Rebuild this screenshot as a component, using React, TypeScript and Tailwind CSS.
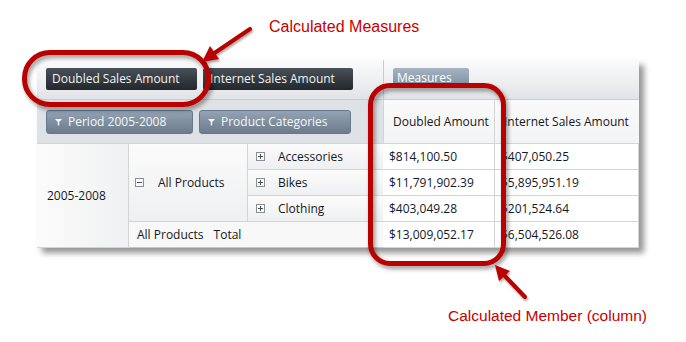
import React from "react";

const Funnel = () => (
  <svg width="7" height="8" viewBox="0 0 7 8" className="shrink-0">
    <polygon points="0,1 7,1 4.2,4 4.2,7.5 2.8,7.5 2.8,4" fill="#f4f6f8" />
  </svg>
);

const PlusBox = ({ minus = false }: { minus?: boolean }) => (
  <svg width="9" height="9" viewBox="0 0 9 9" className="shrink-0">
    <rect x="0.5" y="0.5" width="8" height="8" fill="#fbfbfb" stroke="#8a8f96" />
    <line x1="2" y1="4.5" x2="7" y2="4.5" stroke="#4a4f56" />
    {!minus && <line x1="4.5" y1="2" x2="4.5" y2="7" stroke="#4a4f56" />}
  </svg>
);

export default function App() {
  const cell = "border-b border-r border-[#d2d4d6] flex items-center";
  const val = "bg-white " + cell + " pl-[6px]";
  return (
    <div className="relative w-[686px] h-[342px] bg-white overflow-hidden font-['Open_Sans',sans-serif] text-[12px] text-[#141826]">
      <div className="pt-[60px] pl-[37px]">
        <div className="w-[602px] shadow-[5px_5px_6px_rgba(0,0,0,0.42)] bg-white">
          {/* header row 1 */}
          <div className="flex h-[40px] bg-gradient-to-b from-[#fbfbfc] to-[#e1e4e7] border-b border-[#c8cdd2]">
            <div className="w-[346px] flex gap-[6px] pl-[9px] pt-[8px]">
              <div className="w-[151px] h-[22px] rounded-[2px] bg-gradient-to-b from-[#4a5159] to-[#22272c] text-[#f3f3f3] flex items-center pl-[6px] leading-none">
                Doubled Sales Amount
              </div>
              <div className="w-[150px] h-[22px] rounded-[2px] bg-gradient-to-b from-[#4a5159] to-[#22272c] text-[#f3f3f3] flex items-center pl-[7px] leading-none">
                Internet Sales Amount
              </div>
            </div>
            <div className="flex-1 border-l border-[#c6cbd0] pl-[9px] pt-[8px]">
              <div className="w-[76px] h-[20px] rounded-[2px] bg-gradient-to-b from-[#a5b3c2] to-[#7c8c9d] text-white flex items-center pl-[4px] leading-none">
                Measures
              </div>
            </div>
          </div>
          {/* header row 2 */}
          <div className="flex h-[44px] border-b border-[#d2d4d6]">
            <div className="w-[346px] bg-[#dee1e5] flex gap-[6px] pl-[9px] pt-[10px]">
              <div className="w-[147px] h-[24px] rounded-[3px] border border-[#66788a] bg-gradient-to-b from-[#93a3b3] to-[#6c7c8d] text-[#f6f7f8] flex items-center gap-[6px] pl-[8px] leading-none">
                <Funnel />
                Period 2005-2008
              </div>
              <div className="w-[152px] h-[24px] rounded-[3px] border border-[#66788a] bg-gradient-to-b from-[#93a3b3] to-[#6c7c8d] text-[#f6f7f8] flex items-center gap-[6px] pl-[8px] leading-none">
                <Funnel />
                Product Categories
              </div>
            </div>
            <div className="w-[112px] border-l border-r border-[#d2d4d6] bg-gradient-to-b from-[#fafafa] to-[#f3f4f5] flex items-center pl-[9px]">
              Doubled Amount
            </div>
            <div className="w-[144px] bg-gradient-to-b from-[#fafafa] to-[#f3f4f5] flex items-center pl-[9px]">
              Internet Sales Amount
            </div>
          </div>
          {/* data */}
          <div className="grid grid-cols-[92px_119px_135px_112px_144px] grid-rows-[26px_26px_26px_26px]">
            <div className="row-span-4 border-r border-b border-[#d2d4d6] bg-gradient-to-r from-[#fbfbfb] to-[#f0f1f2] flex items-center pl-[10px]">
              2005-2008
            </div>
            <div className="row-span-3 border-r border-b border-[#d2d4d6] bg-gradient-to-b from-[#fbfbfb] to-[#eff0f1] flex items-center pl-[6px] gap-[14px]">
              <PlusBox minus />
              All Products
            </div>
            <div className="bg-gradient-to-b from-[#fcfcfc] to-[#eeeff0] border-b border-[#d2d4d6] flex items-center pl-[8px] gap-[13px]">
              <PlusBox />
              Accessories
            </div>
            <div className={val}>$814,100.50</div>
            <div className={val}>$407,050.25</div>
            <div className="bg-gradient-to-b from-[#fcfcfc] to-[#eeeff0] border-b border-[#d2d4d6] flex items-center pl-[8px] gap-[13px]">
              <PlusBox />
              Bikes
            </div>
            <div className={val}>$11,791,902.39</div>
            <div className={val}>$5,895,951.19</div>
            <div className="bg-gradient-to-b from-[#fcfcfc] to-[#eeeff0] border-b border-[#d2d4d6] flex items-center pl-[8px] gap-[13px]">
              <PlusBox />
              Clothing
            </div>
            <div className={val}>$403,049.28</div>
            <div className={val}>$201,524.64</div>
            <div className="col-span-2 bg-[#f8f8f8] border-b border-[#c4c6c8] flex items-center pl-[8px]">
              <span>All Products</span>
              <span className="ml-[10px]">Total</span>
            </div>
            <div className={val + " border-[#c4c6c8]"}>$13,009,052.17</div>
            <div className={val + " border-[#c4c6c8]"}>$6,504,526.08</div>
          </div>
        </div>
      </div>

      {/* annotations */}
      <div className="absolute inset-0 pointer-events-none font-['Liberation_Sans',Arial,sans-serif]">
        <div className="absolute left-[269px] top-[18px] text-[16px] leading-[18px] text-[#c80000]">
          Calculated Measures
        </div>
        <div className="absolute left-[448px] top-[307px] text-[15.5px] leading-[18px] text-[#c80000]">
          Calculated Member (column)
        </div>
        <div className="absolute left-[22px] top-[50px] w-[189px] h-[57px] rounded-[28px] border-[5px] border-[#bb0000] drop-shadow-[2px_3px_2px_rgba(0,0,0,0.4)]" />
        <div className="absolute left-[368px] top-[83px] w-[138px] h-[183px] rounded-[22px] border-[5px] border-[#bb0000] drop-shadow-[2px_3px_2px_rgba(0,0,0,0.4)]" />
        <svg
          width="686"
          height="342"
          viewBox="0 0 686 342"
          className="absolute left-0 top-0 drop-shadow-[1px_2px_1px_rgba(0,0,0,0.35)]"
        >
          <line x1="250" y1="29" x2="213" y2="54" stroke="#bb0000" strokeWidth="4" strokeLinecap="round" />
          <polygon points="202,62 219,59 210,46" fill="#bb0000" />
          <line x1="525" y1="297" x2="503" y2="274" stroke="#bb0000" strokeWidth="4" strokeLinecap="round" />
          <polygon points="495,265 510,271 499,281" fill="#bb0000" />
        </svg>
      </div>
    </div>
  );
}
